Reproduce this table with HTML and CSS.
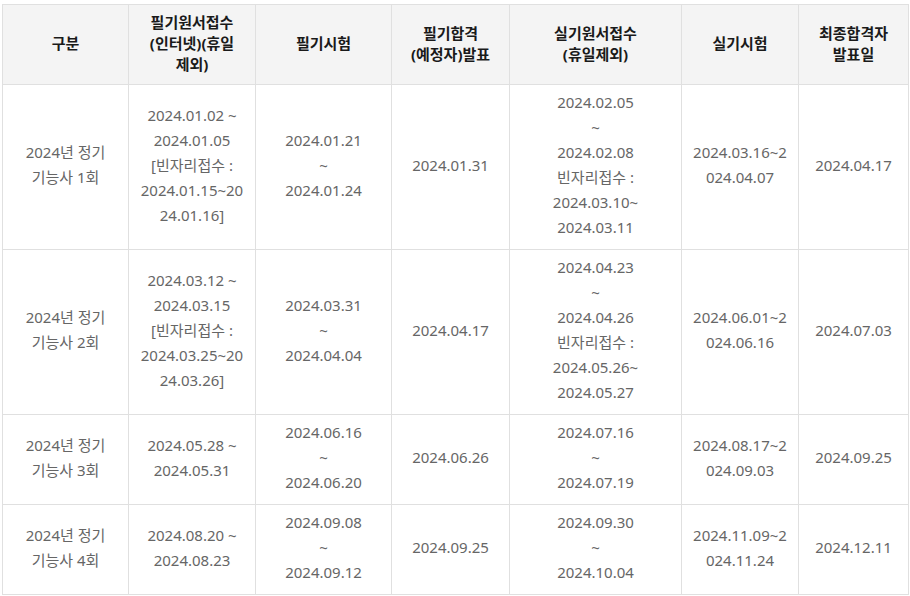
FILE: index.html
```html
<!DOCTYPE html>
<html lang="ko">
<head>
<meta charset="utf-8">
<title>2024년 정기 기능사 시험일정</title>
<link rel="stylesheet" href="styles.css">
</head>
<body>
<table class="schedule">
  <colgroup>
    <col class="c1"><col class="c2"><col class="c3"><col class="c4"><col class="c5"><col class="c6"><col class="c7">
  </colgroup>
  <thead>
    <tr>
      <th>구분</th>
      <th>필기원서접수<br>(인터넷)(휴일<br>제외)</th>
      <th>필기시험</th>
      <th>필기합격<br>(예정자)발표</th>
      <th>실기원서접수<br>(휴일제외)</th>
      <th>실기시험</th>
      <th>최종합격자<br>발표일</th>
    </tr>
  </thead>
  <tbody>
    <tr>
      <td>2024년 정기<br>기능사 1회</td>
      <td>2024.01.02 ~<br>2024.01.05<br>[빈자리접수 :<br>2024.01.15~20<br>24.01.16]</td>
      <td>2024.01.21<br>~<br>2024.01.24</td>
      <td>2024.01.31</td>
      <td>2024.02.05<br>~<br>2024.02.08<br>빈자리접수 :<br>2024.03.10~<br>2024.03.11</td>
      <td>2024.03.16~2<br>024.04.07</td>
      <td>2024.04.17</td>
    </tr>
    <tr>
      <td>2024년 정기<br>기능사 2회</td>
      <td>2024.03.12 ~<br>2024.03.15<br>[빈자리접수 :<br>2024.03.25~20<br>24.03.26]</td>
      <td>2024.03.31<br>~<br>2024.04.04</td>
      <td>2024.04.17</td>
      <td>2024.04.23<br>~<br>2024.04.26<br>빈자리접수 :<br>2024.05.26~<br>2024.05.27</td>
      <td>2024.06.01~2<br>024.06.16</td>
      <td>2024.07.03</td>
    </tr>
    <tr>
      <td>2024년 정기<br>기능사 3회</td>
      <td>2024.05.28 ~<br>2024.05.31</td>
      <td>2024.06.16<br>~<br>2024.06.20</td>
      <td>2024.06.26</td>
      <td>2024.07.16<br>~<br>2024.07.19</td>
      <td>2024.08.17~2<br>024.09.03</td>
      <td>2024.09.25</td>
    </tr>
    <tr>
      <td>2024년 정기<br>기능사 4회</td>
      <td>2024.08.20 ~<br>2024.08.23</td>
      <td>2024.09.08<br>~<br>2024.09.12</td>
      <td>2024.09.25</td>
      <td>2024.09.30<br>~<br>2024.10.04</td>
      <td>2024.11.09~2<br>024.11.24</td>
      <td>2024.12.11</td>
    </tr>
  </tbody>
</table>
</body>
</html>
```

FILE: styles.css
```css
html, body {
  margin: 0;
  padding: 0;
  background: #ffffff;
}

body {
  padding: 4px 2px 0 2px;
  font-family: "Noto Sans", "Noto Sans CJK KR", sans-serif;
}

.schedule {
  width: 906px;
  border-collapse: collapse;
  table-layout: fixed;
}

.c1 { width: 126px; }
.c2 { width: 127px; }
.c3 { width: 136px; }
.c4 { width: 118px; }
.c5 { width: 172px; }
.c6 { width: 117px; }
.c7 { width: 110px; }

.schedule th,
.schedule td {
  border: 1px solid #e0e0e0;
  text-align: center;
  vertical-align: middle;
}

.schedule th {
  background: #f4f4f4;
  color: #1a1a1a;
  font-size: 15px;
  font-weight: 700;
  line-height: 21px;
  padding: 7px 4px 9px;
}

.schedule td {
  color: #666666;
  font-size: 15px;
  font-weight: 400;
  line-height: 25px;
  padding: 5px 4px 9px;
}
```
